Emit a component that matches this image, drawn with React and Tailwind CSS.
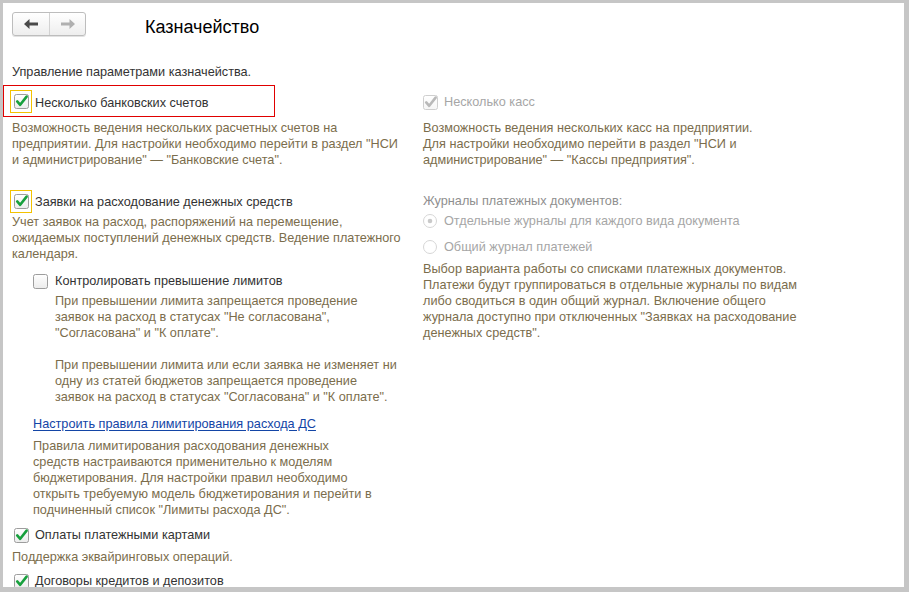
import React from 'react'

const font = { fontFamily: '"Liberation Sans", Arial, sans-serif' }

function Check({ checked = true, disabled = false }) {
  const border = disabled ? '#cfcfcf' : '#9d9d9d'
  const mark = disabled ? '#b9b9b9' : '#17a03d'
  return (
    <svg width="15" height="15" viewBox="0 0 15 15" className="shrink-0">
      <defs>
        <linearGradient id={disabled ? 'cbd' : 'cb'} x1="0" y1="0" x2="0" y2="1">
          <stop offset="0" stopColor="#ffffff" />
          <stop offset="1" stopColor={disabled ? '#f6f6f6' : '#ececec'} />
        </linearGradient>
      </defs>
      <rect x="0.5" y="0.5" width="14" height="14" rx="2" fill={`url(#${disabled ? 'cbd' : 'cb'})`} stroke={border} />
      {checked && (
        <path d="M3.2 7.4 L6.2 10.8 L12.6 2.6" fill="none" stroke={mark} strokeWidth="2.6" strokeLinecap="round" strokeLinejoin="round" />
      )}
    </svg>
  )
}

function Radio({ selected }) {
  return (
    <svg width="14" height="14" viewBox="0 0 14 14" className="shrink-0">
      <circle cx="7" cy="7" r="6.5" fill="#fff" stroke="#d6d6d6" />
      {selected && <circle cx="7" cy="7" r="2.3" fill="#c9c9c9" />}
    </svg>
  )
}

function Lines({ lines, className = '' }) {
  return (
    <div className={`text-[12.7px] leading-[16px] text-[#7b6d4c] ${className}`}>
      {lines.map((l, i) => (
        <div key={i} className="whitespace-nowrap h-[16px]">{l || '\u00a0'}</div>
      ))}
    </div>
  )
}

function NavButtons() {
  return (
    <div className="flex h-[24px] w-[74px] rounded-[3px] border border-[#bdbdbd] bg-gradient-to-b from-white to-[#eeeeee] shadow-[0_1px_0_#e2e2e2]">
      <div className="w-[37px] flex items-center justify-center border-r border-[#d2d2d2]">
        <svg width="14" height="10" viewBox="0 0 14 10">
          <path d="M0 5 L5.5 0 L5.5 3.5 L14 3.5 L14 6.5 L5.5 6.5 L5.5 10 Z" fill="#4a4a4a" />
        </svg>
      </div>
      <div className="flex-1 flex items-center justify-center">
        <svg width="14" height="10" viewBox="0 0 14 10">
          <path d="M14 5 L8.5 0 L8.5 3.5 L0 3.5 L0 6.5 L8.5 6.5 L8.5 10 Z" fill="#b0b0b0" />
        </svg>
      </div>
    </div>
  )
}

export default function App() {
  return (
    <div className="w-[909px] h-[592px] bg-[#c6c6c6] pt-[3px] pl-[3px] pr-[5px] pb-[5px]" style={font}>
      <div className="bg-white h-full overflow-hidden pl-[9px] pt-[9px] text-[#333333]">
        {/* Header */}
        <div className="flex items-start h-[24px]">
          <NavButtons />
          <div className="ml-[59px] mt-[3px] text-[18px] leading-[24px] text-black">Казначейство</div>
        </div>

        <div className="mt-[28px] text-[12.7px] leading-[16px] text-[#333]">Управление параметрами казначейства.</div>

        <div className="flex mt-[5px]">
          {/* Left column */}
          <div className="w-[411px] shrink-0">
            <div className="-ml-[9px] w-[272px] h-[32px] border border-[#e00000] flex items-center pl-[6px]">
              <div className="w-[22px] h-[23px] border border-[#f3c200] flex items-center justify-center">
                <Check />
              </div>
              <span className="ml-[3px] text-[12.7px] leading-[16px] mt-[3px]">Несколько банковских счетов</span>
            </div>
            <Lines
              className="mt-[3px]"
              lines={[
                'Возможность ведения нескольких расчетных счетов на',
                'предприятии. Для настройки необходимо перейти в раздел "НСИ',
                'и администрирование" — "Банковские счета".',
              ]}
            />

            <div className="-ml-[2px] mt-[22px] flex items-center h-[23px]">
              <div className="w-[22px] h-[23px] border border-[#f3c200] flex items-center justify-center">
                <Check />
              </div>
              <span className="ml-[3px] text-[12.7px] leading-[16px]">Заявки на расходование денежных средств</span>
            </div>
            <Lines
              className="mt-[1px]"
              lines={[
                'Учет заявок на расход, распоряжений на перемещение,',
                'ожидаемых поступлений денежных средств. Ведение платежного',
                'календаря.',
              ]}
            />

            <div className="mt-[11px] ml-[21px] flex items-center h-[16px]">
              <Check checked={false} />
              <span className="ml-[7px] text-[12.7px] leading-[16px]">Контролировать превышение лимитов</span>
            </div>
            <Lines
              className="mt-[4px] ml-[43px]"
              lines={[
                'При превышении лимита запрещается проведение',
                'заявок на расход в статусах "Не согласована",',
                '"Согласована" и "К оплате".',
                '',
                'При превышении лимита или если заявка не изменяет ни',
                'одну из статей бюджетов запрещается проведение',
                'заявок на расход в статусах "Согласована" и "К оплате".',
              ]}
            />

            <div className="mt-[11px] ml-[21px] text-[12.7px] leading-[16px] h-[16px]">
              <a className="text-[#1345a6] underline underline-offset-[2px] whitespace-nowrap">Настроить правила лимитирования расхода ДС</a>
            </div>
            <Lines
              className="mt-[6px] ml-[21px]"
              lines={[
                'Правила лимитирования расходования денежных',
                'средств настраиваются применительно к моделям',
                'бюджетирования. Для настройки правил необходимо',
                'открыть требуемую модель бюджетирования и перейти в',
                'подчиненный список "Лимиты расхода ДС".',
              ]}
            />

            <div className="mt-[9px] ml-[2px] flex items-center h-[16px]">
              <Check />
              <span className="ml-[6px] text-[12.7px] leading-[16px]">Оплаты платежными картами</span>
            </div>
            <Lines className="mt-[6px]" lines={['Поддержка эквайринговых операций.']} />

            <div className="mt-[8px] ml-[2px] flex items-center h-[16px]">
              <Check />
              <span className="ml-[6px] text-[12.7px] leading-[16px]">Договоры кредитов и депозитов</span>
            </div>
          </div>

          {/* Right column */}
          <div className="flex-1">
            <div className="mt-[9px] flex items-center h-[16px]">
              <Check disabled />
              <span className="ml-[6px] text-[12.7px] leading-[16px] text-[#a6a6a6]">Несколько касс</span>
            </div>
            <Lines
              className="mt-[10px]"
              lines={[
                'Возможность ведения нескольких касс на предприятии.',
                'Для настройки необходимо перейти в раздел "НСИ и',
                'администрирование" — "Кассы предприятия".',
              ]}
            />

            <div className="mt-[25px] text-[12.7px] leading-[16px] text-[#8f8f8f]">Журналы платежных документов:</div>
            <div className="mt-[4px] flex items-center h-[16px]">
              <Radio selected />
              <span className="ml-[7px] text-[12.7px] leading-[16px] text-[#a6a6a6]">Отдельные журналы для каждого вида документа</span>
            </div>
            <div className="mt-[10px] flex items-center h-[16px]">
              <Radio />
              <span className="ml-[7px] text-[12.7px] leading-[16px] text-[#a6a6a6]">Общий журнал платежей</span>
            </div>
            <Lines
              className="mt-[6px]"
              lines={[
                'Выбор варианта работы со списками платежных документов.',
                'Платежи будут группироваться в отдельные журналы по видам',
                'либо сводиться в один общий журнал. Включение общего',
                'журнала доступно при отключенных "Заявках на расходование',
                'денежных средств".',
              ]}
            />
          </div>
        </div>
      </div>
    </div>
  )
}
